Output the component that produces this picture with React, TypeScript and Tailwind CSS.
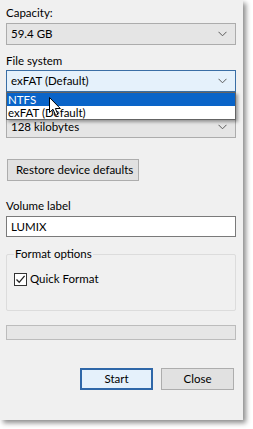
import { useState } from 'react';

function Chevron() {
  return (
    <svg width="9" height="6" viewBox="0 0 9 6" className="shrink-0">
      <path d="M0.5 0.8 L4.5 4.8 L8.5 0.8" fill="none" stroke="#5a5a5a" strokeWidth="1" />
    </svg>
  );
}

function Combo({ value, active = false }: { value: string; active?: boolean }) {
  return (
    <div
      className={`h-[22px] w-[230px] flex items-center justify-between pl-[4px] pr-[8px] border ${
        active ? 'bg-[#e5f1fb] border-[#3a6ea5]' : 'bg-[#e5e5e5] border-[#acacac]'
      }`}
    >
      <span>{value}</span>
      <Chevron />
    </div>
  );
}

function Cursor() {
  return (
    <svg
      width="13"
      height="20"
      viewBox="0 0 13 20"
      className="absolute left-[42px] top-[4px] pointer-events-none"
    >
      <path
        d="M0.5 0.5 L0.5 15.5 L4 12.2 L6.6 18.4 L8.9 17.4 L6.4 11.5 L11.3 11.5 Z"
        fill="#ffffff"
        stroke="#000000"
        strokeWidth="1"
        strokeLinejoin="round"
      />
    </svg>
  );
}

export default function App() {
  const [quick, setQuick] = useState(true);

  return (
    <div className="w-[253px] h-[429px] bg-white overflow-hidden font-['Lato','Noto_Sans',sans-serif] text-[11.5px] leading-[16px] text-black whitespace-nowrap">
      <div className="w-[243px] h-[420px] bg-[#f0f0f0] shadow-[3px_3px_5px_rgba(0,0,0,0.45)] pl-[6px] pt-[4px] flex flex-col">
        <div className="mt-[1px]">Capacity:</div>
        <div className="mt-[2px]">
          <Combo value="59.4 GB" />
        </div>

        <div className="mt-[8px]">File system</div>
        <div className="mt-[1px] relative z-10">
          <Combo value="exFAT (Default)" active />
          <div className="absolute left-0 top-full w-[230px] border border-[#646464] bg-white shadow-[2px_2px_3px_rgba(0,0,0,0.35)]">
            <div className="h-[13px] leading-[13px] pl-[1px] bg-[#0a64c8] text-white">NTFS</div>
            <div className="h-[13px] leading-[13px] pl-[1px]">exFAT (Default)</div>
            <Cursor />
          </div>
        </div>

        {/* allocation unit size combo, its label sits under the open list */}
        <div className="mt-[24px]">
          <Combo value="128 kilobytes" />
        </div>

        <button className="mt-[21px] ml-[1px] self-start h-[22px] w-[132px] bg-[#e1e1e1] border border-[#adadad] text-left pl-[8px]">
          Restore device defaults
        </button>

        <div className="mt-[17px]">Volume label</div>
        <div className="mt-[2px] h-[21px] w-[230px] bg-white border border-[#7a7a7a] flex items-center pl-[4px]">
          LUMIX
        </div>

        <div className="mt-[17px] relative w-[230px] h-[57px] border border-[#dcdcdc] rounded-[2px]">
          <span className="absolute left-[7px] top-[-9px] bg-[#f0f0f0] px-[1px]">Format options</span>
          <label className="absolute left-[7px] top-[16px] flex items-center gap-[3px]">
            <span
              onClick={() => setQuick(!quick)}
              className="w-[13px] h-[13px] bg-white border border-[#333333] flex items-center justify-center"
            >
              {quick && (
                <svg width="11" height="11" viewBox="0 0 11 11">
                  <path d="M1.5 5.5 L4.2 8.3 L9.6 1.8" fill="none" stroke="#222222" strokeWidth="1.3" />
                </svg>
              )}
            </span>
            <span>Quick Format</span>
          </label>
        </div>

        <div className="mt-[14px] h-[15px] w-[230px] bg-[#e6e6e6] border border-[#bcbcbc]" />

        <div className="mt-[28px] flex gap-[8px] ml-[74px]">
          <button className="h-[22px] w-[73px] bg-[#e5f1fb] border-2 border-[#2f67a8]">Start</button>
          <button className="h-[22px] w-[73px] bg-[#e1e1e1] border border-[#adadad]">Close</button>
        </div>
      </div>
    </div>
  );
}
